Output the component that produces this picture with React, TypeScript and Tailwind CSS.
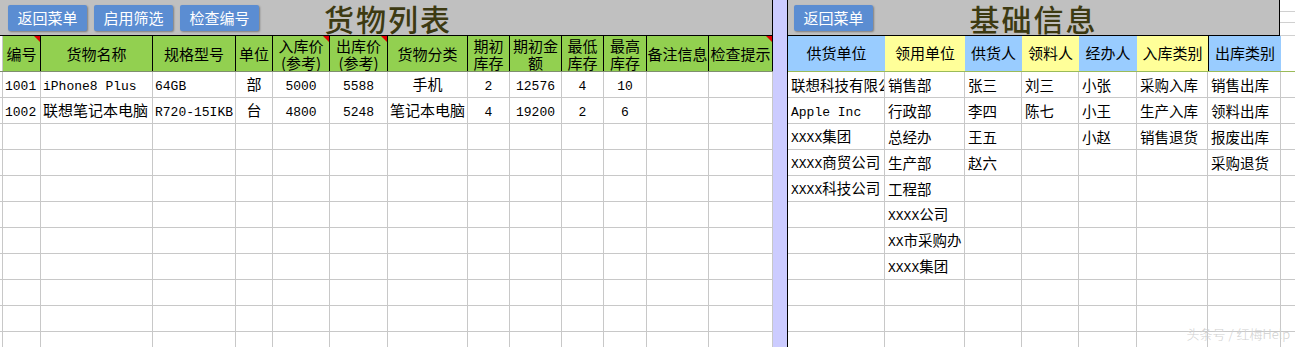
import React from 'react';

// split a string into runs of latin (half-width mono) and CJK text
function Mixed({ text }: { text: string }) {
  const parts = text.split(/([\x20-\x7e]+)/).filter(Boolean);
  return (
    <span className="whitespace-nowrap">
      {parts.map((p, i) =>
        /^[\x20-\x7e]+$/.test(p) ? (
          <span key={i} className="font-['Liberation_Mono',monospace] text-[13px]">
            {p}
          </span>
        ) : (
          <span key={i}>{p}</span>
        )
      )}
    </span>
  );
}

function RedMark() {
  return (
    <span className="absolute top-0 right-0 w-0 h-0 border-t-[6px] border-l-[6px] border-t-[#e00000] border-l-transparent" />
  );
}

const leftHeaders: { label: React.ReactNode; mark?: boolean }[] = [
  { label: '编号', mark: true },
  { label: '货物名称' },
  { label: '规格型号' },
  { label: '单位' },
  { label: <>入库价<br />(参考)</>, mark: true },
  { label: <>出库价<br />(参考)</>, mark: true },
  { label: '货物分类' },
  { label: <>期初<br />库存</> },
  { label: <>期初金<br />额</> },
  { label: <>最低<br />库存</> },
  { label: <>最高<br />库存</> },
  { label: '备注信息' },
  { label: '检查提示', mark: true },
];

// alignment per column: l = left, c = center
const leftAlign = ['l', 'l', 'l', 'c', 'c', 'c', 'c', 'c', 'c', 'c', 'c', 'c', 'c'];

const goods = [
  ['1001', 'iPhone8 Plus', '64GB', '部', '5000', '5588', '手机', '2', '12576', '4', '10', '', ''],
  ['1002', '联想笔记本电脑', 'R720-15IKB', '台', '4800', '5248', '笔记本电脑', '4', '19200', '2', '6', '', ''],
];

const rightHeaders = [
  { label: '供货单位', bg: 'bg-[#99ccff]' },
  { label: '领用单位', bg: 'bg-[#ffff99]' },
  { label: '供货人', bg: 'bg-[#99ccff]' },
  { label: '领料人', bg: 'bg-[#ffff99]' },
  { label: '经办人', bg: 'bg-[#99ccff]' },
  { label: '入库类别', bg: 'bg-[#ffff99]' },
  { label: '出库类别', bg: 'bg-[#99ccff] border-l border-l-black' },
];

const basics = [
  ['联想科技有限公司', '销售部', '张三', '刘三', '小张', '采购入库', '销售出库'],
  ['Apple Inc', '行政部', '李四', '陈七', '小王', '生产入库', '领料出库'],
  ['XXXX集团', '总经办', '王五', '', '小赵', '销售退货', '报废出库'],
  ['XXXX商贸公司', '生产部', '赵六', '', '', '', '采购退货'],
  ['XXXX科技公司', '工程部', '', '', '', '', ''],
  ['', 'XXXX公司', '', '', '', '', ''],
  ['', 'XX市采购办', '', '', '', '', ''],
  ['', 'XXXX集团', '', '', '', '', ''],
];

const ROWS = 11;

const leftGrid =
  'grid grid-cols-[3px_38px_112px_83px_37px_57px_58px_80px_42px_52px_42px_43px_62px_64px]';
const rightGrid = 'grid grid-cols-[97px_80px_57px_57px_58px_71px_73px]';

function Button({ children }: { children: React.ReactNode }) {
  return (
    <div className="h-[26px] w-[79px] flex items-center justify-center bg-[#5b8dd2] text-white text-[15px] rounded-[2px] shadow-[1px_1px_2px_rgba(0,0,0,0.35)]">
      {children}
    </div>
  );
}

export default function App() {
  const leftRows = Array.from({ length: ROWS }, (_, i) => goods[i] ?? Array(13).fill(''));
  const rightRows = Array.from({ length: ROWS }, (_, i) => basics[i] ?? Array(7).fill(''));

  return (
    <div className="relative w-[1295px] h-[347px] overflow-hidden bg-white flex font-['Noto_Sans_CJK_SC',sans-serif] text-black">
      {/* 货物列表 */}
      <div className="w-[773px] shrink-0 flex flex-col">
        <div className="h-[36px] shrink-0 bg-[#c0c0c0] border-b border-r border-black grid grid-cols-[1fr_auto_1fr] items-center">
          <div className="flex gap-[7px] pl-[8px] pt-[1px]">
            <Button>返回菜单</Button>
            <Button>启用筛选</Button>
            <Button>检查编号</Button>
          </div>
          <div className="text-[30px] leading-[34px] font-medium text-[#3d3a12] tracking-[2px] pl-[4px]">货物列表</div>
          <div />
        </div>
        <div className={`${leftGrid} h-[36px] shrink-0 border-b border-[#7f8f6f]`}>
          <div className="border-r border-[#c8c8c8]" />
          {leftHeaders.map((h, i) => (
            <div
              key={i}
              className="relative bg-[#92d050] border-r border-black flex items-center justify-center text-center text-[15px] leading-[17px] whitespace-nowrap overflow-hidden"
            >
              <div>{h.label}</div>
              {h.mark && <RedMark />}
            </div>
          ))}
        </div>
        {leftRows.map((row, r) => (
          <div key={r} className={`${leftGrid} h-[26px] shrink-0`}>
            <div className="border-r border-b border-[#c8c8c8]" />
            {row.map((cell: string, c: number) => (
              <div
                key={c}
                className={`border-r border-b border-[#c8c8c8] flex items-center overflow-hidden whitespace-nowrap text-[15px] ${
                  leftAlign[c] === 'c' ? 'justify-center' : 'justify-start pl-[2px]'
                }`}
              >
                <Mixed text={cell} />
              </div>
            ))}
          </div>
        ))}
      </div>

      {/* divider */}
      <div className="w-[14px] shrink-0 bg-[#ccccff]" />

      {/* 基础信息 */}
      <div className="w-[493px] shrink-0 flex flex-col border-l border-black">
        <div className="h-[36px] shrink-0 bg-[#c0c0c0] border-b border-r border-black grid grid-cols-[1fr_auto_1fr] items-center">
          <div className="pl-[6px] pt-[1px]">
            <Button>返回菜单</Button>
          </div>
          <div className="text-[30px] leading-[34px] font-medium text-[#3d3a12] tracking-[2px]">基础信息</div>
          <div />
        </div>
        <div className={`${rightGrid} h-[36px] shrink-0 border-b border-[#9bbb59]`}>
          {rightHeaders.map((h, i) => (
            <div key={i} className={`${h.bg} flex items-center justify-center text-[15px] whitespace-nowrap`}>
              {h.label}
            </div>
          ))}
        </div>
        {rightRows.map((row, r) => (
          <div key={r} className={`${rightGrid} h-[26px] shrink-0`}>
            {row.map((cell: string, c: number) => (
              <div
                key={c}
                className="border-r border-b border-[#c8c8c8] flex items-center pl-[3px] overflow-hidden whitespace-nowrap text-[14.5px]"
              >
                <Mixed text={cell} />
              </div>
            ))}
          </div>
        ))}
      </div>

      {/* trailing empty column */}
      <div className="w-[15px] shrink-0 flex flex-col">
        <div className="h-[12px] shrink-0 border-b border-[#d0d0d0]" />
        <div className="h-[11px] shrink-0 border-b border-[#d0d0d0]" />
        <div className="h-[13px] shrink-0 border-b border-[#d0d0d0]" />
        <div className="h-[36px] shrink-0 border-b border-[#9bbb59]" />
        {Array.from({ length: ROWS }, (_, i) => (
          <div key={i} className="h-[26px] shrink-0 border-b border-[#c8c8c8]" />
        ))}
      </div>

      {/* watermark */}
      <div className="absolute right-[5px] bottom-[7px] text-[13px] leading-none font-light text-[#d0d0d0]">
        头条号 / 红梅Help
      </div>
    </div>
  );
}
